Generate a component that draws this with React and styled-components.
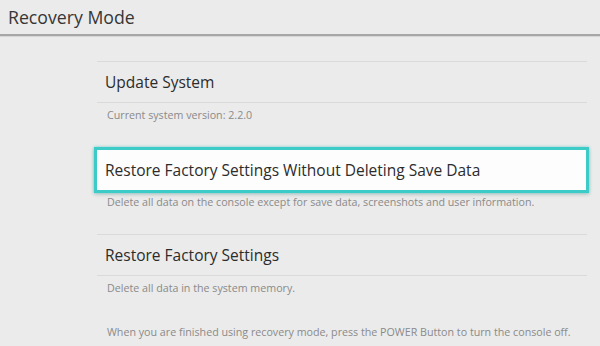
import React from "react";
import styled, { createGlobalStyle } from "styled-components";

const Global = createGlobalStyle`
  html, body { margin: 0; padding: 0; background: #ebebeb; }
  body { font-family: "Open Sans", "Noto Sans", sans-serif; }
`;

const Page = styled.div`
  width: 600px;
  height: 346px;
  background: #ebebeb;
  overflow: hidden;
`;

const Header = styled.header`
  height: 34px;
  display: flex;
  align-items: center;
  padding-left: 8px;
  border-bottom: 2px solid #a7a7a7;
  box-shadow: 0 1px 0 #d6d6d6;
  font-size: 17.7px;
  color: #363636;
`;

const List = styled.div`
  margin: 25px 0 0 97px;
  width: 490px;
  display: flex;
  flex-direction: column;
`;

const Option = styled.div`
  height: ${p => (p.$selected ? "46px" : "42px")};
  box-sizing: border-box;
  display: flex;
  align-items: center;
  font-size: 15.5px;
  color: #2c2c2c;
  padding-left: 8px;
  ${p =>
    p.$selected
      ? `
    margin: -1px -2px -3px -3px;
    background: #fdfdfd;
    border: 3px solid #3ccbc6;
    box-shadow: 0 0 3px rgba(40, 190, 190, 0.55), 0 2px 4px rgba(0,0,0,0.12);
  `
      : `
    border-top: 1px solid #dadada;
    border-bottom: 1px solid #dadada;
  `}
`;

const Desc = styled.div`
  height: ${p => p.$h || 44}px;
  padding-left: 10px;
  line-height: 24px;
  font-size: 10.7px;
  color: #8a8a8a;
`;

const Footer = styled.div`
  margin: 20px 0 0 107px;
  line-height: 24px;
  font-size: 10.7px;
  color: #8a8a8a;
`;

export default function App() {
  return (
    <Page>
      <Global />
      <Header>Recovery Mode</Header>
      <List>
        <Option>Update System</Option>
        <Desc $h={45}>Current system version: 2.2.0</Desc>
        <Option $selected>Restore Factory Settings Without Deleting Save Data</Option>
        <Desc $h={44}>Delete all data on the console except for save data, screenshots and user information.</Desc>
        <Option>Restore Factory Settings</Option>
        <Desc $h={24}>Delete all data in the system memory.</Desc>
      </List>
      <Footer>When you are finished using recovery mode, press the POWER Button to turn the console off.</Footer>
    </Page>
  );
}
